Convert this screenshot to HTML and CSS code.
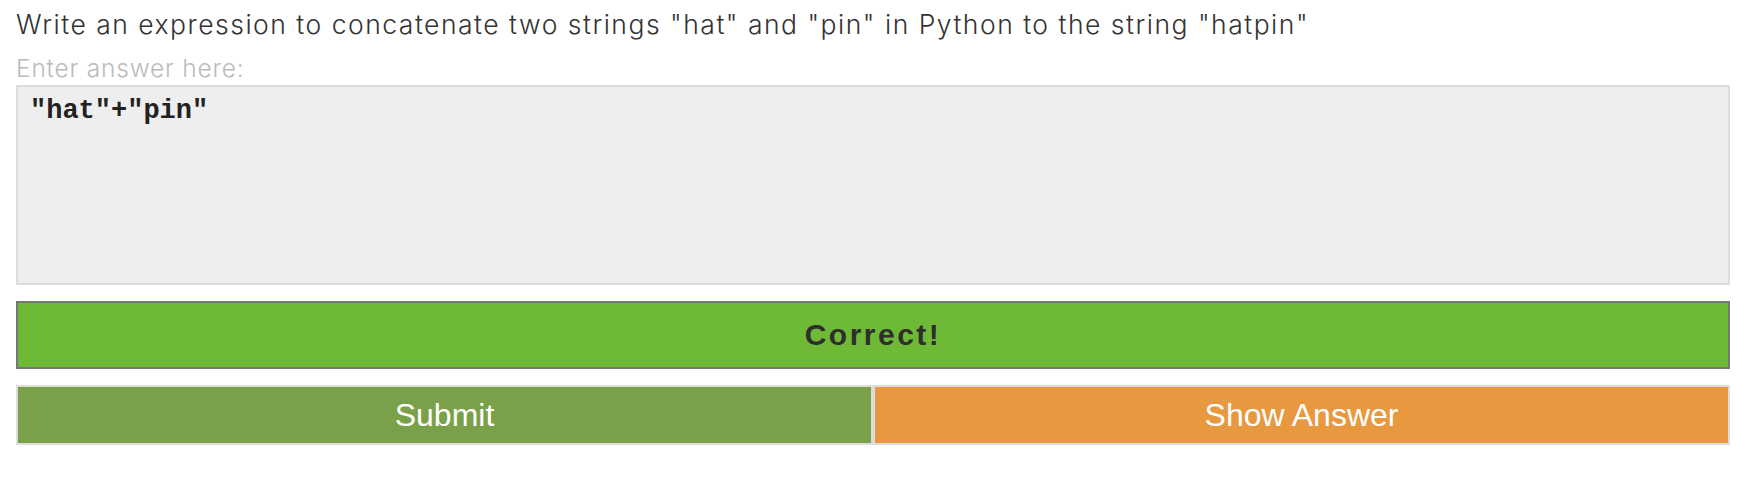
FILE: index.html
```html
<!DOCTYPE html>
<html>
<head>
<meta charset="utf-8">
<link rel="stylesheet" href="styles.css">
</head>
<body>
<div class="exercise">
  <p class="prompt">Write an expression to concatenate two strings "hat" and "pin" in Python to the string "hatpin"</p>
  <label class="hint">Enter answer here:</label>
  <div class="answer">"hat"+"pin"</div>
  <div class="result">Correct!</div>
  <div class="buttons">
    <button class="btn submit">Submit</button>
    <button class="btn show">Show Answer</button>
  </div>
</div>
</body>
</html>
```
FILE: styles.css
```css
html, body {
  margin: 0;
  padding: 0;
  background: #fff;
}
.exercise {
  padding: 0 32px 0 16px;
  font-family: "Inter", "Liberation Sans", sans-serif;
  font-weight: 300;
}
.prompt {
  margin: 0;
  padding-top: 8px;
  font-size: 26.5px;
  line-height: 32px;
  letter-spacing: 1.5px;
  color: #333;
}
.hint {
  display: block;
  font-size: 24.5px;
  line-height: 30px;
  letter-spacing: 0.8px;
  color: #bbb;
  margin-top: 13px;
}
.answer {
  margin-top: 2px;
  border: 2px solid #ddd;
  background: #eee;
  padding: 9px 12px;
  box-sizing: border-box;
  height: 200px;
  font-family: "Liberation Mono", monospace;
  font-weight: bold;
  font-size: 27px;
  line-height: 30px;
  color: #222;
}
.result {
  margin-top: 16px;
  height: 68px;
  box-sizing: border-box;
  border: 2px solid #777;
  background: #6eba36;
  display: flex;
  align-items: center;
  justify-content: center;
  font-family: "Liberation Sans", sans-serif;
  font-weight: bold;
  font-size: 30px;
  letter-spacing: 2.5px;
  color: #2e2e2e;
}
.buttons {
  margin-top: 16px;
  display: flex;
}
.btn {
  flex: 1;
  height: 60px;
  border: 2px solid #ddd;
  margin: 0;
  padding: 0;
  font-family: "Liberation Sans", sans-serif;
  font-size: 32px;
  color: #fff;
}
.submit {
  background: #7aa049;
}
.show {
  background: #e8983f;
}
```
